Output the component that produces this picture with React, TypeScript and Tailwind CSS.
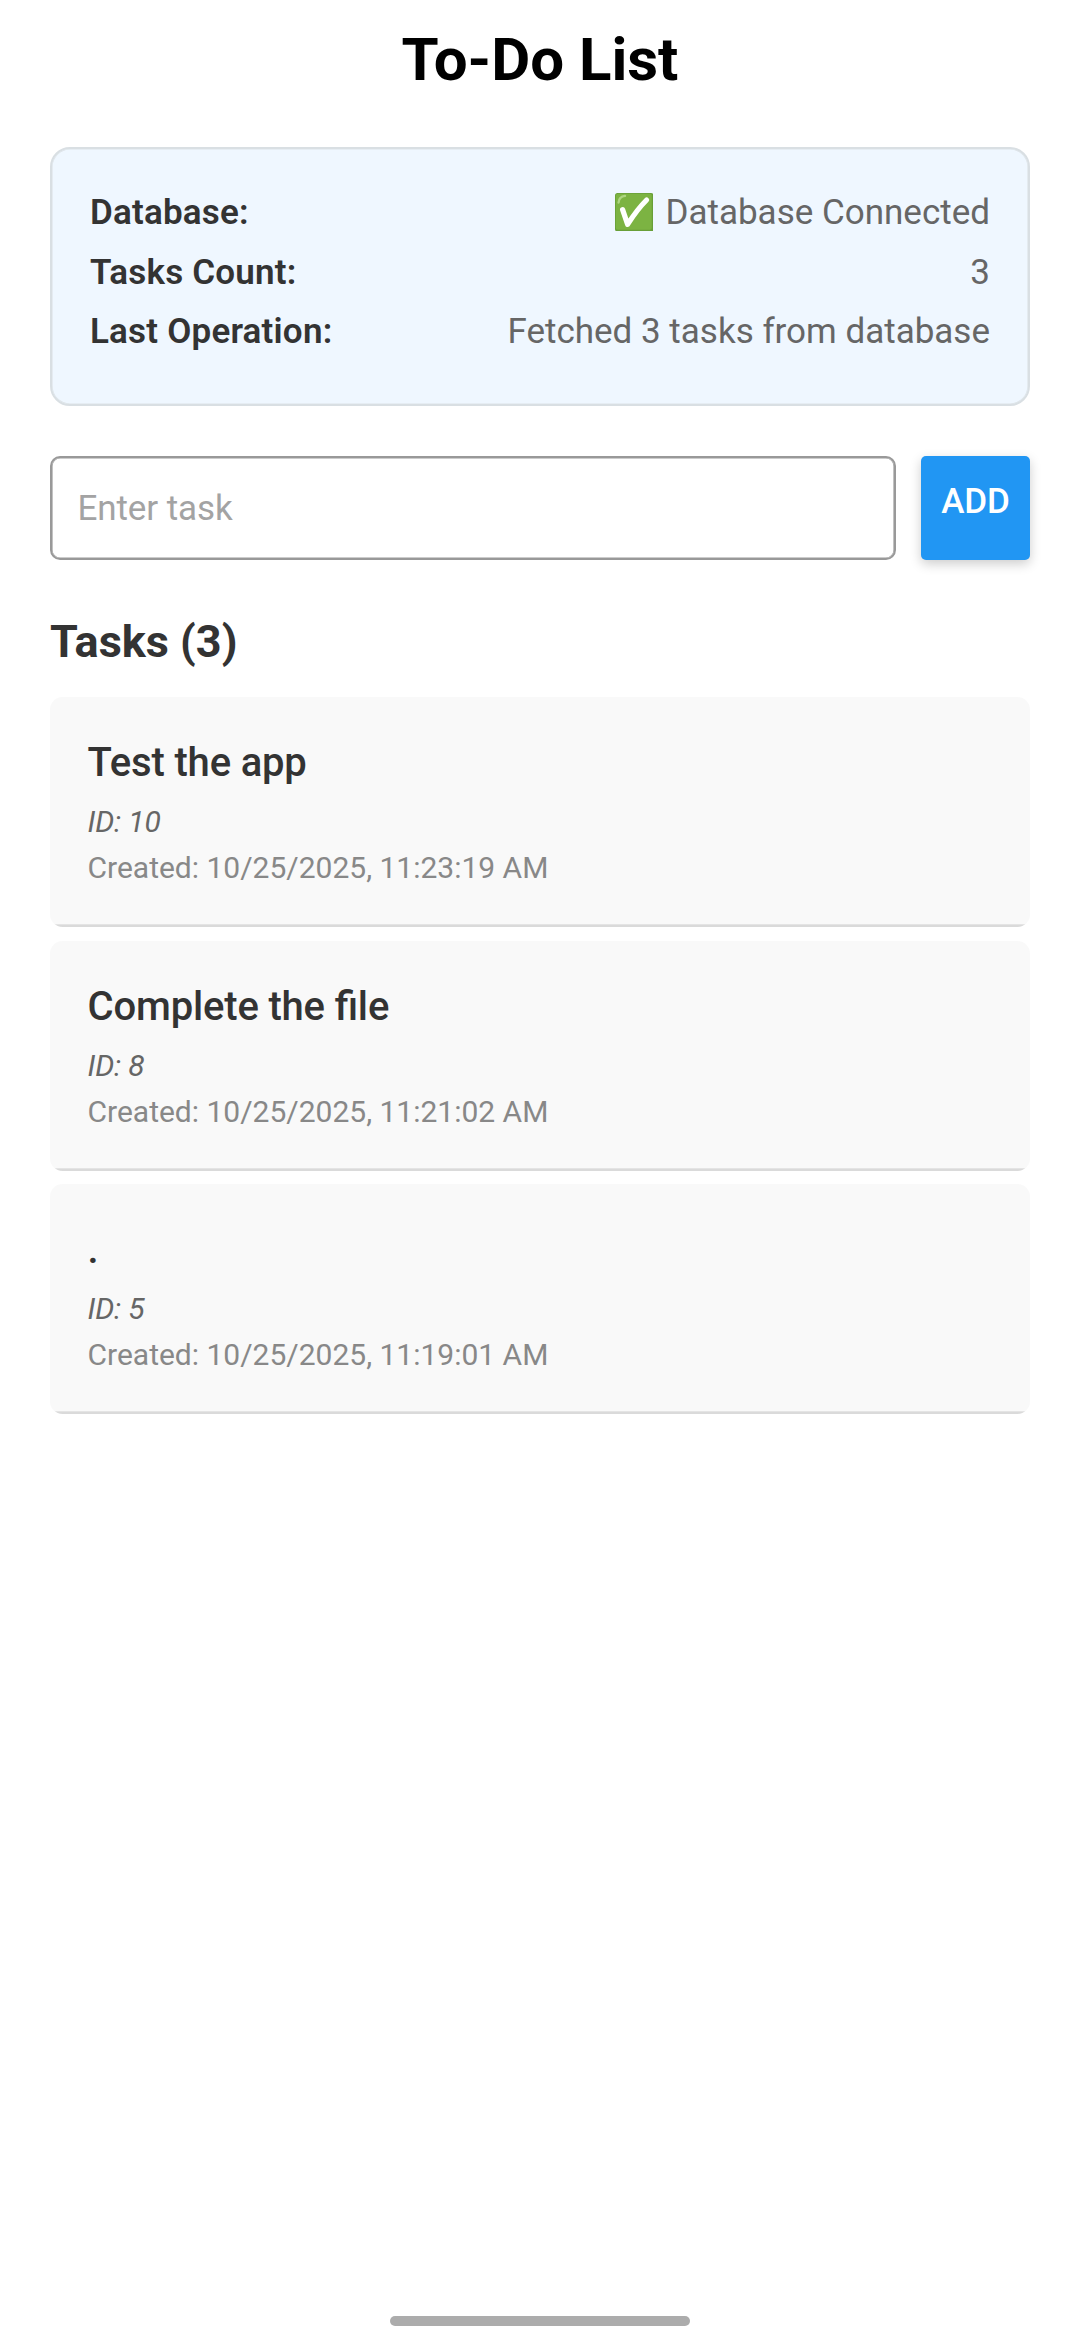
import React from "react";

const info = [
  { label: "Database:", value: "Database Connected", ok: true },
  { label: "Tasks Count:", value: "3" },
  { label: "Last Operation:", value: "Fetched 3 tasks from database" },
];

const tasks = [
  { title: "Test the app", id: 10, created: "10/25/2025, 11:23:19 AM" },
  { title: "Complete the file", id: 8, created: "10/25/2025, 11:21:02 AM" },
  { title: ".", id: 5, created: "10/25/2025, 11:19:01 AM" },
];

function Check() {
  return (
    <svg className="mt-[0.5px] mr-[12px] h-[38.5px] w-[38.5px]" viewBox="0 0 38.5 38.5">
      <rect width="38.5" height="38.5" rx="2.5" fill="#689f38" />
      <rect x="0.8" y="0.8" width="36" height="36" rx="2" fill="#7cb342" />
      <path d="M3.6 9.5C3.8 5.6 6 3.4 10 2.9" fill="none" stroke="#aed581" strokeWidth="2.4" strokeLinecap="round" />
      <path d="M7.6 16.6L12.6 31.4C18 23 24.5 14 31.6 7" fill="none" stroke="#fff" strokeWidth="5.2" strokeLinecap="round" strokeLinejoin="round" />
    </svg>
  );
}

export default function App() {
  return (
    <div className="flex h-[2350px] w-[1080px] flex-col bg-white px-[50px] font-[Roboto,sans-serif]">
      <h1 className="mt-[24px] text-center text-[60px] leading-[71px] font-bold text-black">To-Do List</h1>

      <section className="mt-[52px] h-[259px] rounded-[20px] border-2 border-[#d9dfe3] bg-[#eff7ff] px-[38px] pt-[43px] shadow-[inset_0_0_0_0.6px_#dde3e7]">
        {info.map((row) => (
          <div key={row.label} className="flex h-[59.5px] items-start justify-between text-[35px] leading-[41px]">
            <span className="font-semibold tracking-[0.2px] text-[#333333]">{row.label}</span>
            <span className="flex items-start text-[#666666]">
              {row.ok && <Check />}
              {row.value}
            </span>
          </div>
        ))}
      </section>

      <div className="mt-[50px] flex h-[104px] justify-between">
        <input
          placeholder="Enter task"
          className="h-[104px] w-[846px] rounded-[10px] border-2 border-[#999999] px-[25.5px] text-[35px] leading-[41px] tracking-[-0.1px] shadow-[inset_0_0_0_0.6px_#999999] outline-none placeholder:text-[#a3a3a3]"
        />
        <button className="flex w-[109px] items-start justify-center rounded-[5px] bg-[#2196f3] pt-[25px] text-[35px] leading-[41px] font-medium tracking-[-0.2px] text-white shadow-[0_4px_12px_rgba(0,0,0,0.2)]">
          ADD
        </button>
      </div>

      <h2 className="mt-[55px] text-[45px] leading-[53px] font-bold text-[#333333]">Tasks (3)</h2>

      <div className="mt-[29px] flex flex-col gap-[13.5px]">
        {tasks.map((task) => (
          <article
            key={task.id}
            className="h-[230px] rounded-[12.5px] bg-[linear-gradient(to_bottom,#f9f9f9_227px,#e4e4e4_227px,#e4e4e4_228px,#dadada_228px)] px-[37.5px] pt-[42px]"
          >
            <h3 className="text-[40px] leading-[47px] font-medium tracking-[-0.17px] text-[#333333] [font-feature-settings:'liga'_1]">{task.title}</h3>
            <p className="mt-[18px] text-[30px] leading-[35px] tracking-[-0.2px] text-[#666666] italic">ID: {task.id}</p>
            <p className="mt-[11px] text-[30px] leading-[35px] text-[#888888]">Created: {task.created}</p>
          </article>
        ))}
      </div>

      <div className="mt-auto mb-[24px] h-[10px] w-[300px] self-center rounded-full bg-[#acacac]" />
    </div>
  );
}
